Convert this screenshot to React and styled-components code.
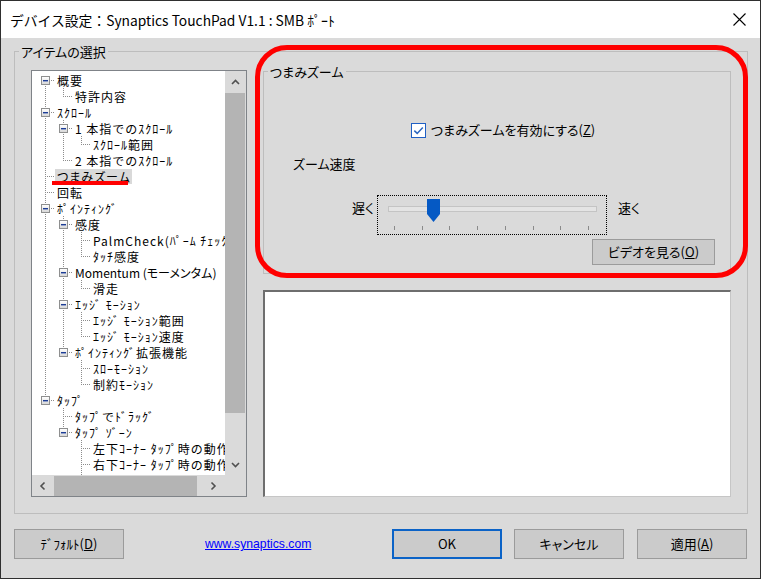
import React from 'react';
import styled, { createGlobalStyle } from 'styled-components';

const UI_FONT = `"Noto Sans CJK JP", "Noto Sans", sans-serif`;
const FACE = '#dadada';

const GlobalStyle = createGlobalStyle`
  html, body { margin: 0; padding: 0; }
  body {
    background: ${FACE};
    font-family: ${UI_FONT};
    font-feature-settings: "palt";
    color: #000;
  }
  *, *::before, *::after { box-sizing: border-box; }
`;

/* ---------- window chrome ---------- */

const Window = styled.div`
  position: relative;
  width: 761px;
  height: 579px;
  border: 1px solid #2f2f2f;
  background: ${FACE};
  display: flex;
  flex-direction: column;
  overflow: hidden;
`;

const TitleBar = styled.header`
  flex: none;
  height: 37px;
  background: #fff;
  display: flex;
  align-items: center;
  padding: 0 14px 0 9px;
`;

const TitleText = styled.h1`
  margin: 0;
  flex: 1;
  font-size: 13.8px;
  font-weight: 400;
  font-feature-settings: normal;
  line-height: 20px;
  white-space: nowrap;
`;

const CloseGlyph = styled.svg`
  display: block;
  width: 13px;
  height: 13px;
`;

const Body = styled.div`
  flex: 1;
  min-height: 0;
  display: flex;
  flex-direction: column;
  gap: 15px;
  padding: 13px 12px 19px 13px;
`;

/* ---------- group boxes ---------- */

const Frame = styled.section`
  position: relative;
  flex: 1;
  min-height: 0;
  border: 1px solid #bdbdbd;
  display: flex;
  gap: 16px;
  padding: 18px 16px 16px 16px;
`;

const Caption = styled.span`
  position: absolute;
  left: 4px;
  top: -8px;
  padding: 0 2px;
  background: ${FACE};
  font-size: 13px;
  line-height: 16px;
  white-space: nowrap;
`;

/* ---------- tree view ---------- */

const TreeBox = styled.div`
  flex: none;
  width: 216px;
  border: 1px solid #7f8388;
  background: #fff;
  display: grid;
  grid-template-columns: 193px 21px;
  grid-template-rows: 404px 21px;
`;

const TreeViewport = styled.ul`
  margin: 0;
  padding: 1px 0 0 4px;
  list-style: none;
  overflow: hidden;
  min-width: 0;
`;

const Row = styled.li`
  display: flex;
  align-items: center;
  height: 16px;
  white-space: nowrap;
`;

const DOTS_V = 'repeating-linear-gradient(to bottom, #8c8c8c 0 1px, transparent 1px 2px)';
const DOTS_H = 'repeating-linear-gradient(to right, #8c8c8c 0 1px, transparent 1px 2px)';

const Guide = styled.span`
  position: relative;
  flex: none;
  width: 18px;
  height: 16px;

  &::before {
    content: '';
    position: absolute;
    left: 9px;
    width: 1px;
    background: ${DOTS_V};
    display: ${p => (p.$kind === 'blank' ? 'none' : 'block')};
    top: ${p => (p.$kind === 'first' ? 8 : 0)}px;
    height: ${p => (p.$kind === 'ell' ? 9 : p.$kind === 'first' ? 8 : 16)}px;
  }

  &::after {
    content: '';
    position: absolute;
    top: 8px;
    left: 9px;
    width: 10px;
    height: 1px;
    background: ${DOTS_H};
    display: ${p => (p.$kind === 'tee' || p.$kind === 'ell' || p.$kind === 'first' ? 'block' : 'none')};
  }
`;

const ExpandBox = styled.span`
  position: absolute;
  z-index: 1;
  left: 5px;
  top: 4px;
  width: 9px;
  height: 9px;
  border: 1px solid #8e8f8f;
  background: linear-gradient(#ffffff, #d8d8d8);

  &::after {
    content: '';
    position: absolute;
    left: 1px;
    top: 3px;
    width: 5px;
    height: 1px;
    background: #1d3d95;
    box-shadow: 0 0.6px 0 #5a72b5;
  }
`;

const NodeLabel = styled.span`
  position: relative;
  margin-left: 1px;
  padding: 0 1px 0 2px;
  font-size: 12px;
  line-height: 15px;
  letter-spacing: ${p => (p.$tight ? 0 : 1)}px;
  font-feature-settings: ${p => (p.$prop ? '"palt"' : 'normal')};
  background: ${p => (p.$selected ? '#d9d9d9' : 'transparent')};

  &::after {
    content: '';
    display: ${p => (p.$selected ? 'block' : 'none')};
    position: absolute;
    left: -3px;
    top: 12px;
    width: 76px;
    height: 4px;
    background: #ff0000;
  }
`;

/* ---------- scroll bars ---------- */

const VScroll = styled.div`
  display: flex;
  flex-direction: column;
  padding-right: 1px;
  background: ${FACE};
`;

const HScroll = styled.div`
  display: flex;
  align-items: center;
  padding-right: 2px;
  background: ${FACE};
`;

const ScrollCorner = styled.div`
  background: ${FACE};
`;

const ArrowButton = styled.div`
  flex: none;
  width: ${p => p.$w}px;
  height: ${p => p.$h}px;
  display: flex;
  align-items: center;
  justify-content: center;
`;

const Thumb = styled.div`
  flex: none;
  background: #b4b4b4;
`;

const Spacer = styled.div`
  flex: 1;
`;

const Chevron = styled.svg`
  display: block;
  width: 9px;
  height: 6px;
  transform: rotate(${p => p.$deg}deg);
`;

const Arrow = ({ deg }) => (
  <Chevron $deg={deg} viewBox="0 0 9 6">
    <polyline points="1,5 4.5,1.5 8,5" fill="none" stroke="#505050" strokeWidth="1.6" />
  </Chevron>
);

/* ---------- right column ---------- */

const RightColumn = styled.div`
  flex: 1;
  min-width: 0;
  display: flex;
  flex-direction: column;
  gap: 16px;
  padding-top: 1px;
`;

const ZoomGroup = styled.section`
  position: relative;
  flex: none;
  height: 203px;
  border: 1px solid #bdbdbd;
  display: flex;
  flex-direction: column;
  padding: 50px 15px 8px 0;
  font-size: 13px;
`;

const CheckRow = styled.label`
  display: flex;
  align-items: center;
  gap: 5px;
  height: 16px;
  margin-left: 147px;
  line-height: 16px;
  white-space: nowrap;
`;

const CheckBox = styled.svg`
  display: block;
  flex: none;
  width: 15px;
  height: 15px;
`;

const FieldLabel = styled.div`
  margin: 18px 0 0 29px;
  line-height: 16px;
`;

const SliderRow = styled.div`
  display: flex;
  align-items: flex-start;
  height: 40px;
  margin: 23px 0 0 88px;
`;

const SliderEnd = styled.span`
  flex: none;
  width: ${p => p.$w}px;
  margin-left: ${p => p.$ml || 0}px;
  padding-top: 5px;
  line-height: 16px;
  white-space: nowrap;
`;

const FocusRect = styled.div`
  flex: none;
  width: 230px;
  height: 40px;
  border: 1px dotted #000;
  display: flex;
  flex-direction: column;
`;

const Track = styled.div`
  position: relative;
  width: 209px;
  height: 6px;
  margin: 10px 0 0 10px;
  border: 1px solid #c4c4c4;
  background: #e4e4e4;
`;

const SliderThumb = styled.svg`
  position: absolute;
  left: 38px;
  top: -8px;
  width: 13px;
  height: 23px;
`;

const TickRow = styled.div`
  display: flex;
  justify-content: space-between;
  width: 195px;
  height: 4px;
  margin: 14px 0 0 16px;
`;

const Tick = styled.span`
  width: 1px;
  height: 4px;
  background: #8a8a8a;
`;

const PushButton = styled.button`
  flex: none;
  width: ${p => p.$w || 110}px;
  height: ${p => p.$h || 30}px;
  margin-left: ${p => p.$ml || 0}px;
  padding: 0;
  background: #cbcbcb;
  border: ${p => (p.$primary ? '2px solid #0b63c7' : '1px solid #9b9b9b')};
  font-family: ${UI_FONT};
  font-feature-settings: ${p => (p.$narrow ? 'normal' : '"palt"')};
  font-size: 13px;
  color: #000;
  line-height: 16px;
  white-space: nowrap;
`;

const VideoButton = styled(PushButton)`
  align-self: flex-end;
  margin-top: 4px;
`;

const PreviewPane = styled.div`
  flex: 1;
  background: #fff;
  border-style: solid;
  border-width: 2px 1px 1px 2px;
  border-color: #6e6e6e #c6c6c6 #c6c6c6 #6e6e6e;
`;

/* ---------- bottom buttons ---------- */

const ButtonRow = styled.div`
  flex: none;
  height: 30px;
  display: flex;
  align-items: center;
  padding-right: 1px;
`;

const WebLink = styled.a`
  margin-left: 81px;
  margin-right: auto;
  font-family: "Liberation Sans", Arial, sans-serif;
  font-size: 12.2px;
  color: #0000ff;
  text-decoration: underline;
`;

/* ---------- pen marker over the settings group ---------- */

const Marker = styled.div`
  position: absolute;
  left: 254px;
  top: 44px;
  width: 493px;
  height: 233px;
  border: 5px solid #ff0000;
  border-radius: 32px;
  pointer-events: none;
`;

const nodes = [
  { label: '概要', guides: [], link: 'first', open: true },
  { label: '特許内容', guides: ['pipe'], link: 'ell' },
  { label: 'ｽｸﾛｰﾙ', guides: [], link: 'tee', open: true },
  { label: '1 本指でのｽｸﾛｰﾙ', guides: ['pipe'], link: 'tee', open: true },
  { label: 'ｽｸﾛｰﾙ範囲', guides: ['pipe', 'pipe'], link: 'ell' },
  { label: '2 本指でのｽｸﾛｰﾙ', guides: ['pipe'], link: 'ell' },
  { label: 'つまみズーム', guides: [], link: 'tee', selected: true, prop: true },
  { label: '回転', guides: [], link: 'tee' },
  { label: 'ﾎﾟｲﾝﾃｨﾝｸﾞ', guides: [], link: 'tee', open: true },
  { label: '感度', guides: ['pipe'], link: 'tee', open: true },
  { label: 'PalmCheck(ﾊﾟｰﾑ ﾁｪｯｸ)', guides: ['pipe', 'pipe'], link: 'tee' },
  { label: 'ﾀｯﾁ感度', guides: ['pipe', 'pipe'], link: 'ell' },
  { label: 'Momentum (モーメンタム)', guides: ['pipe'], link: 'tee', open: true, prop: true, tight: true },
  { label: '滑走', guides: ['pipe', 'pipe'], link: 'ell' },
  { label: 'ｴｯｼﾞ ﾓｰｼｮﾝ', guides: ['pipe'], link: 'tee', open: true },
  { label: 'ｴｯｼﾞ ﾓｰｼｮﾝ範囲', guides: ['pipe', 'pipe'], link: 'tee' },
  { label: 'ｴｯｼﾞ ﾓｰｼｮﾝ速度', guides: ['pipe', 'pipe'], link: 'ell' },
  { label: 'ﾎﾟｲﾝﾃｨﾝｸﾞ拡張機能', guides: ['pipe'], link: 'ell', open: true },
  { label: 'ｽﾛｰﾓｰｼｮﾝ', guides: ['pipe', 'blank'], link: 'tee' },
  { label: '制約ﾓｰｼｮﾝ', guides: ['pipe', 'blank'], link: 'ell' },
  { label: 'ﾀｯﾌﾟ', guides: [], link: 'ell', open: true },
  { label: 'ﾀｯﾌﾟでﾄﾞﾗｯｸﾞ', guides: ['blank'], link: 'tee' },
  { label: 'ﾀｯﾌﾟ ｿﾞｰﾝ', guides: ['blank'], link: 'ell', open: true },
  { label: '左下ｺｰﾅｰ ﾀｯﾌﾟ時の動作', guides: ['blank', 'blank'], link: 'tee' },
  { label: '右下ｺｰﾅｰ ﾀｯﾌﾟ時の動作', guides: ['blank', 'blank'], link: 'tee' },
  { label: '左上ｺｰﾅｰ ﾀｯﾌﾟ時の動作', guides: ['blank', 'blank'], link: 'tee' },
];

const TreeNode = ({ node }) => (
  <Row>
    {node.guides.map((g, i) => (
      <Guide key={i} $kind={g} />
    ))}
    <Guide $kind={node.link}>{node.open && <ExpandBox />}</Guide>
    <NodeLabel $selected={node.selected} $prop={node.prop} $tight={node.tight}>
      {node.label}
    </NodeLabel>
  </Row>
);

export default function App() {
  return (
    <>
      <GlobalStyle />
      <Window>
        <TitleBar>
          <TitleText>デバイス設定：Synaptics TouchPad V1.1 : SMB ﾎﾟｰﾄ</TitleText>
          <CloseGlyph viewBox="0 0 13 13">
            <path d="M0.5 0.5 L12.5 12.5 M12.5 0.5 L0.5 12.5" stroke="#000" strokeWidth="1.1" />
          </CloseGlyph>
        </TitleBar>

        <Body>
          <Frame>
            <Caption>アイテムの選択</Caption>

            <TreeBox>
              <TreeViewport>
                {nodes.map((n, i) => (
                  <TreeNode key={i} node={n} />
                ))}
              </TreeViewport>
              <VScroll>
                <ArrowButton $w={20} $h={21}>
                  <Arrow deg={0} />
                </ArrowButton>
                <Thumb style={{ height: 320, marginTop: 1 }} />
                <Spacer />
                <ArrowButton $w={20} $h={20}>
                  <Arrow deg={180} />
                </ArrowButton>
              </VScroll>
              <HScroll>
                <ArrowButton $w={20} $h={20}>
                  <Arrow deg={-90} />
                </ArrowButton>
                <Thumb style={{ width: 143, height: 20, marginLeft: 2 }} />
                <Spacer />
                <ArrowButton $w={20} $h={20}>
                  <Arrow deg={90} />
                </ArrowButton>
              </HScroll>
              <ScrollCorner />
            </TreeBox>

            <RightColumn>
              <ZoomGroup>
                <Caption>つまみズーム</Caption>
                <CheckRow>
                  <CheckBox viewBox="0 0 15 15">
                    <rect x="0.5" y="0.5" width="14" height="14" fill="#fff" stroke="#1f5fc4" />
                    <polyline points="3.3,7.6 6.2,10.4 11.8,4.4" fill="none" stroke="#2b66bf" strokeWidth="1.5" />
                  </CheckBox>
                  <span>
                    つまみズームを有効にする(<u>Z</u>)
                  </span>
                </CheckRow>
                <FieldLabel>ズーム速度</FieldLabel>
                <SliderRow>
                  <SliderEnd $w={25}>遅く</SliderEnd>
                  <FocusRect>
                    <Track>
                      <SliderThumb viewBox="0 0 13 23">
                        <path d="M0 0 H13 V15 L6.5 23 L0 15 Z" fill="#0559c4" />
                      </SliderThumb>
                    </Track>
                    <TickRow>
                      {Array.from({ length: 8 }).map((_, i) => (
                        <Tick key={i} />
                      ))}
                    </TickRow>
                  </FocusRect>
                  <SliderEnd $w={30} $ml={11}>速く</SliderEnd>
                </SliderRow>
                <VideoButton $w={123} $h={26}>
                  ビデオを見る(<u>O</u>)
                </VideoButton>
              </ZoomGroup>
              <PreviewPane />
            </RightColumn>
          </Frame>

          <ButtonRow>
            <PushButton $narrow>
              ﾃﾞﾌｫﾙﾄ(<u>D</u>)
            </PushButton>
            <WebLink href="#">www.synaptics.com</WebLink>
            <PushButton $primary>OK</PushButton>
            <PushButton $ml={12}>キャンセル</PushButton>
            <PushButton $ml={13}>
              適用(<u>A</u>)
            </PushButton>
          </ButtonRow>
        </Body>

        <Marker />
      </Window>
    </>
  );
}
